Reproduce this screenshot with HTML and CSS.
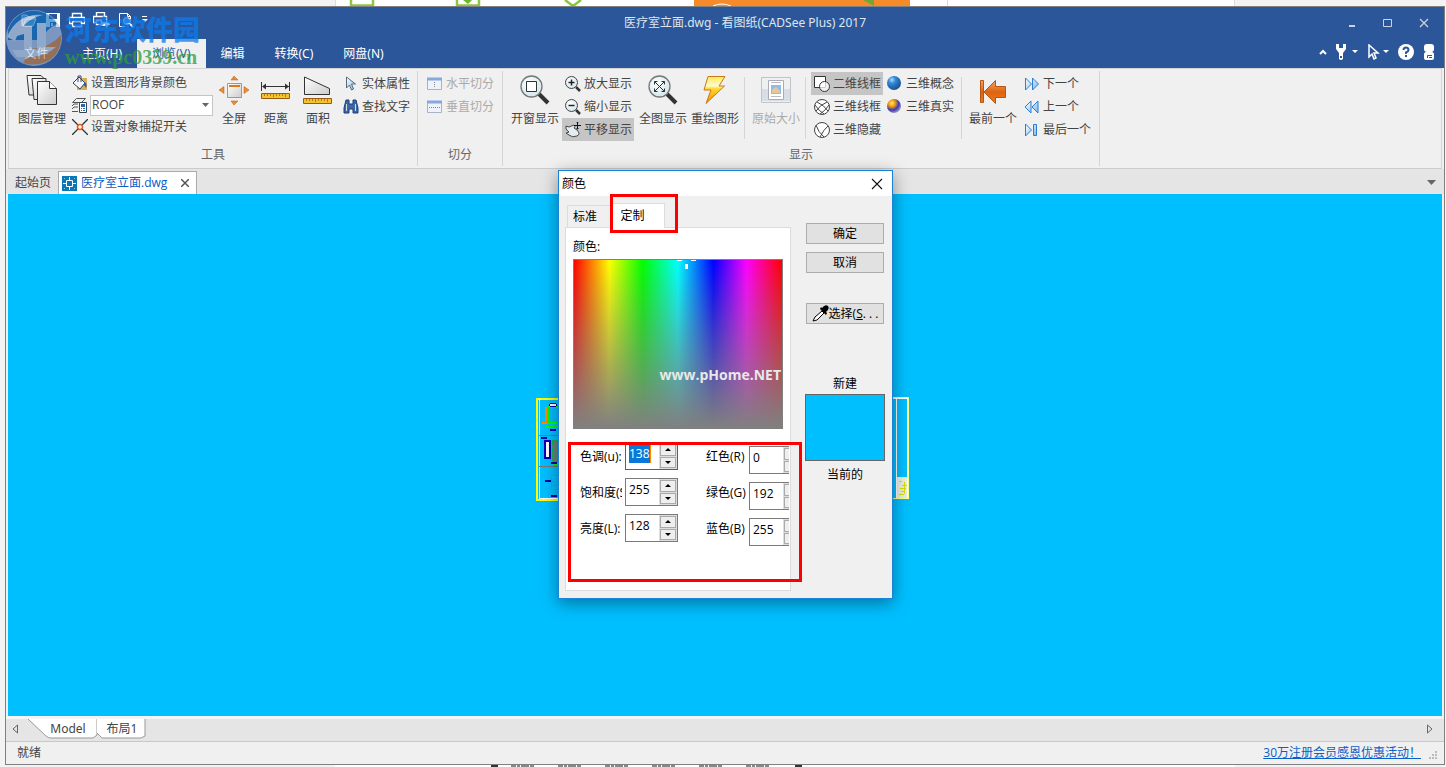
FILE: index.html
```html
<!DOCTYPE html>
<html lang="zh-CN">
<head>
<meta charset="utf-8">
<title>医疗室立面.dwg - 看图纸(CADSee Plus) 2017</title>
<link rel="stylesheet" href="styles.css">
</head>
<body>
<svg width="0" height="0" class="defs" aria-hidden="true">
  <defs>
    <linearGradient id="gPage" x1="0" y1="0" x2="1" y2="1"><stop offset="0" stop-color="#fff"/><stop offset="1" stop-color="#ccc"/></linearGradient>
    <linearGradient id="gBlue" x1="0" y1="0" x2="1" y2="1"><stop offset="0" stop-color="#fff"/><stop offset="1" stop-color="#7ab8f0"/></linearGradient>
    <linearGradient id="gBolt" x1="0" y1="0" x2="0" y2="1"><stop offset="0" stop-color="#ffe95a"/><stop offset=".35" stop-color="#fffbd0"/><stop offset=".45" stop-color="#ffd930"/><stop offset="1" stop-color="#ff8a00"/></linearGradient>
    <linearGradient id="gArrow" x1="0" y1="0" x2="0" y2="1"><stop offset="0" stop-color="#f4a56a"/><stop offset=".5" stop-color="#dd6410"/><stop offset="1" stop-color="#f07a18"/></linearGradient>
    <radialGradient id="gLens" cx=".4" cy=".35" r=".7"><stop offset="0" stop-color="#fff"/><stop offset="1" stop-color="#cfe6e8"/></radialGradient>
    <radialGradient id="gBall" cx=".35" cy=".28" r=".75"><stop offset="0" stop-color="#a8e0ff"/><stop offset=".35" stop-color="#3486d6"/><stop offset="1" stop-color="#175090"/></radialGradient>
    <radialGradient id="gGold" cx=".35" cy=".3" r=".75"><stop offset="0" stop-color="#fff050"/><stop offset=".35" stop-color="#e8901c"/><stop offset=".65" stop-color="#3b39b8"/><stop offset="1" stop-color="#a8a4b8"/></radialGradient>
  </defs>
</svg>

<div class="strip strip-top" aria-hidden="true">
  <svg width="1446" height="6" viewBox="0 0 1446 6"><path fill="#fff" d="M335 0h900v6H335z"/><path stroke="#ddd" d="M335.500 0v6M947.500 0v6M1234.500 0v6"/><path fill="none" stroke="#8cc63f" stroke-width="2.500" d="M351 0v5.500h22V0M457 0v5.500h22V0M565 0l8 6 8-6"/><path fill="#6fb52d" d="M463 0h9l-4 4z"/><path fill="#f58b2b" d="M694 0h216v6H694z"/><path d="M713 6q9-4 18 0" fill="none" stroke="#fff"/><path fill="#6fa53a" d="M863 0h11v6z"/></svg>
</div>

<main class="window">
  <header class="head">
    <div class="titlebar">
      <div class="quick">
        <button aria-label="打开"><svg width="16" height="16"><path d="M1 14V3h5l1 2h7v3M2 14l3-7h10l-3 7z" fill="#6fa0cc" stroke="#fff"/></svg></button>
        <button aria-label="保存"><svg width="16" height="16"><path fill="#fff" d="M1 1h14v14H1z"/><path fill="#2b579a" d="M4 2h8v5H4zM5 10h6v5H5z"/><path fill="#fff" d="M6 11h2v3H6z"/></svg></button>
        <button aria-label="打印"><svg width="16" height="16"><path d="M3.500 5.500v-4h9v4M3.500 11.500h-3v-6h15v6h-3M3.500 9.500h9v5h-9z" fill="none" stroke="#fff" stroke-width="1.400"/></svg></button>
        <button aria-label="批量打印"><svg width="17" height="16"><path d="M3.500 4.500v-4h8v4M3.500 10.500h-3v-6h13v4M3.500 8.500h5v4h-5z" fill="none" stroke="#fff" stroke-width="1.400"/><path fill="#fff" d="M8 10h5v-2l4 4-4 4v-2H8z"/></svg></button>
        <button aria-label="打印预览"><svg width="16" height="16"><path d="M7 14.500H1.500v-13h8l3 3v4M9.500 1.500v3h3" fill="none" stroke="#fff"/><circle cx="9" cy="9" r="3.500" fill="#6fa0cc" stroke="#fff"/><path d="M12 12l3 3" stroke="#fff" stroke-width="2"/></svg></button>
        <button class="narrow" aria-label="自定义快速访问工具栏"><svg width="6" height="8"><path fill="#fff" d="M0 0h5v1H0zM0 3h6L3 6z"/></svg></button>
      </div>
      <h1>医疗室立面.dwg - 看图纸(CADSee Plus) 2017</h1>
      <div class="winctl">
        <button aria-label="最小化"><svg width="10" height="10"><path stroke="#cbd3df" stroke-width="2" d="M2 8h6"/></svg></button>
        <button aria-label="最大化"><svg width="10" height="10"><path fill="none" stroke="#cbd3df" d="M.5 1.500h8v7h-8z"/></svg></button>
        <button aria-label="关闭"><svg width="10" height="10"><path stroke="#cbd3df" stroke-width="1.300" d="M1 1l8 8M9 1L1 9"/></svg></button>
      </div>
    </div>
    <nav class="menubar">
      <button class="file">文件</button><button>主页(H)</button><button class="on">浏览(V)</button><button>编辑</button><button>转换(C)</button><button>网盘(N)</button>
      <div class="tools">
        <button aria-label="折叠功能区"><svg width="8" height="6"><path d="M1 5l3-3 3 3" fill="none" stroke="#fff" stroke-width="2"/></svg></button>
        <button aria-label="设置"><svg width="22" height="16"><path fill="#fff" d="M0 0h3v4h4V0h3v5L7 9v6q-2 2-4 0V9L0 5zM16 6h6l-3 3z"/><path fill="#2b579a" d="M4 12h2v2H4z"/></svg></button>
        <button aria-label="选择工具"><svg width="22" height="16"><path d="M2 1v12l3-3 2 5 2-1-2-5h4z" fill="#2b579a" stroke="#fff" stroke-width="1.500"/><path fill="#fff" d="M16 6h6l-3 3z"/></svg></button>
        <button aria-label="帮助"><svg width="16" height="16"><circle cx="8" cy="8" r="8" fill="#fff"/><path d="M5.500 6q0-2.500 2.500-2.500T10.500 6Q10.500 7.500 8 8.500V10" fill="none" stroke="#2b579a" stroke-width="2"/><path fill="#2b579a" d="M7 11h2v2H7z"/></svg></button>
        <button aria-label="账户"><svg width="12" height="18"><rect x="1" y="1" width="10" height="8" rx="3" fill="#fff"/><rect x="1" y="9" width="10" height="8" rx="2" fill="#fff"/><path d="M1 9h1M10 9h1M4.500 15v-2.500H9M6 14.500h3" stroke="#2b579a" fill="none"/></svg></button>
      </div>
    </nav>
  </header>

  <section class="ribbon" aria-label="浏览">
    <div class="group">
      <div class="items">
        <button class="big"><svg width="32" height="32"><g fill="url(#gPage)" stroke="#333"><path d="M1 1.500h14l3 3V21H3z"/><path d="M6 4.500h14v21H8z"/><path d="M11.500 7.500h12l7 7v16h-19z"/><path d="M23.500 7.500v7h7" fill="#fff"/></g></svg>图层管理</button>
        <div class="col tight">
          <button><svg width="16" height="16"><path d="M5 3h10v12H5z" fill="#d8ad55"/><path d="M1 8l6-6 6 6-5 6z" fill="#f2f6fa" stroke="#345"/><path d="M6 7V1h3v6" fill="none" stroke="#446"/><path d="M12 7q4 1 2 6l-2-3z" fill="#2462ac"/></svg>设置图形背景颜色</button>
          <div class="combo"><svg width="16" height="16"><path d="M5.500 1.500h9l-4 4h-9zM1 9l2-2h4M1 12l2-2h4M1 14.500h6" fill="none" stroke="#555"/><path fill="#fff" stroke="#345" d="M8.500 5.500h7v10h-7z"/><path fill="#2668b0" d="M10 7h4v3h-4zM10 11h1v1h-1zM12 11h2v1h-2zM10 13h1v1h-1zM12 13h2v1h-2z"/></svg><span class="selbox"><select aria-label="图层"><option>ROOF</option></select><svg width="7" height="4"><path fill="#666" d="M0 0h7L3.500 4z"/></svg></span></div>
          <button><svg width="16" height="16"><path d="M0 0l16 16M16 0L0 16" stroke="#333" stroke-width="1.300"/><circle cx="8" cy="8" r="2.500" fill="#fff" stroke="#e25a1c" stroke-width="1.500"/></svg>设置对象捕捉开关</button>
        </div>
        <button class="big mid"><svg width="32" height="32"><path d="M9.500 9.500h14v14h-14z" fill="url(#gPage)" stroke="#999"/><path stroke="#e07818" stroke-width="2" d="M11 12h11"/><path fill="#ee8a30" stroke="#b85c10" stroke-width=".5" d="M16 2l4 4h-7zM16 31l4-4h-7zM1 16l5-3.500v7zM31 16l-5-3.500v7z"/></svg>全屏</button>
        <button class="big mid"><svg width="32" height="32"><path d="M1.500 8v9M29.500 8v9M3 12.500h26" stroke="#333"/><path fill="#333" d="M2 12.500l4-3v6zM29 12.500l-4-3v6z"/><path fill="#f2c32c" stroke="#9a5b14" d="M1.500 19.500h28v5h-28z"/><path stroke="#b07c1c" d="M4.500 20v2M7.500 20v2M10.500 20v2M13.500 20v3M16.500 20v2M19.500 20v2M22.500 20v2M25.500 20v3"/></svg>距离</button>
        <button class="big mid"><svg width="32" height="32"><path fill="url(#gPage)" stroke="#333" d="M2.500 3v17.500h25v-6z"/><path fill="#f2c32c" stroke="#9a5b14" d="M1.500 24.500h28v5h-28z"/><path stroke="#b07c1c" d="M4.500 25v2M7.500 25v2M10.500 25v2M13.500 25v3M16.500 25v2M19.500 25v2M22.500 25v2M25.500 25v3"/></svg>面积</button>
        <div class="col">
          <button><svg width="16" height="16"><path d="M3.500 1v11l3-3 2 5 2-1-2-5h4z" fill="url(#gBlue)" stroke="#5a6a7a"/></svg>实体属性</button>
          <button><svg width="16" height="16"><path d="M3 1h3v4h4V1h3l2 8v5h-5v-4H6v4H1V9z" fill="#3a68a8" stroke="#1f3f78"/><path stroke="#cde" d="M3.500 5v7M12.500 5v7"/></svg>查找文字</button>
        </div>
      </div>
      <h2>工具</h2>
    </div>
    <div class="group split">
      <div class="items">
        <div class="col">
          <button disabled><svg width="16" height="16"><path fill="#eef3fb" stroke="#a8b4c6" d="M.5 2.500h14v11H.5z"/><path stroke="#85a9dc" stroke-width="3" d="M0 3h15"/><path stroke="#888" stroke-dasharray="1 1" d="M7.500 6v6"/></svg>水平切分</button>
          <button disabled><svg width="16" height="16"><path fill="#eef3fb" stroke="#a8b4c6" d="M.5 2.500h14v11H.5z"/><path stroke="#85a9dc" stroke-width="3" d="M0 3h15"/><path stroke="#888" stroke-dasharray="1 1" d="M2 8.500h11"/></svg>垂直切分</button>
        </div>
      </div>
      <h2>切分</h2>
    </div>
    <div class="group display">
      <div class="items">
        <button class="big"><svg width="32" height="32"><path d="M20 20l9 9" stroke="#333" stroke-width="4"/><circle cx="12.500" cy="12.500" r="10.500" fill="url(#gLens)" stroke="#777" stroke-width="1.300"/><path d="M7.500 7.500h10v10h-10z" fill="#fff" stroke="#333"/></svg>开窗显示</button>
        <div class="col fit">
          <button><svg width="16" height="16"><path d="M11 11l4 4" stroke="#333" stroke-width="2.500"/><circle cx="6.500" cy="6.500" r="6" fill="url(#gLens)" stroke="#444"/><path stroke="#222" stroke-width="1.500" d="M3.500 6.500h6M6.500 3.500v6"/></svg>放大显示</button>
          <button><svg width="16" height="16"><path d="M11 11l4 4" stroke="#333" stroke-width="2.500"/><circle cx="6.500" cy="6.500" r="6" fill="url(#gLens)" stroke="#444"/><path stroke="#222" stroke-width="1.500" d="M3.500 6.500h6"/></svg>缩小显示</button>
          <button class="sel"><svg width="16" height="16"><path fill="#e4edf1" stroke="#444" d="M1 4l3 1 5-2q2 1 0 3l3 2q4 4 0 6-5 2-8-1l-3-2 3-1-3-3z"/><path stroke="#111" d="M12.500 0v7M9 3.500h7"/><path fill="#111" d="M11 1l1.500-1L14 1zM11 6h3l-1.500 1.500z"/></svg>平移显示</button>
        </div>
        <button class="big"><svg width="32" height="32"><path d="M20 20l9 9" stroke="#333" stroke-width="4"/><circle cx="12.500" cy="12.500" r="10.500" fill="url(#gLens)" stroke="#777" stroke-width="1.300"/><path d="M7.500 7.500l10 10M17.500 7.500l-10 10M7.500 10.500v-3h3M14.500 7.500h3v3M17.500 14.500v3h-3M10.500 17.500h-3v-3" fill="none" stroke="#333"/></svg>全图显示</button>
        <button class="big"><svg width="32" height="32"><path d="M9 2.500h17L20 12h5.500L7 29.500l5-13.500H5z" fill="url(#gBolt)" stroke="#c97814"/></svg>重绘图形</button>
        <i class="sep"></i>
        <button class="big" disabled><svg width="32" height="32"><path d="M1.500 3.500h29v25h-29z" fill="#eef0f2" stroke="#c0c4c8"/><path fill="#d9dee5" d="M2 15h28v12H2z"/><path d="M8.500 6.500h15v19h-15z" fill="#fff" stroke="#aab"/><path fill="#8fbce8" d="M11 11h10v9H11z"/><path fill="#e6c79c" d="M12 16l4-3 4 4v2h-8z"/><path stroke="#bbb" d="M11 8.500h10M11 22.500h10"/></svg>原始大小</button>
        <i class="sep"></i>
        <div class="col fit">
          <button class="sel"><svg width="16" height="16"><path d="M.5.500h11v11H.5z" fill="#fff" stroke="#333"/><circle cx="10.500" cy="10.500" r="5" fill="#fff" fill-opacity=".75" stroke="#333"/></svg>二维线框</button>
          <button><svg width="16" height="16"><g fill="#fff" stroke="#444"><circle cx="8" cy="8" r="7.500"/><path fill="none" d="M1 6q4 6 9 9M15 6q-4 6-9 9M3 3q7 3 11 9M13 3Q6 6 2 12"/></g></svg>三维线框</button>
          <button><svg width="16" height="16"><g fill="#fff" stroke="#444"><circle cx="8" cy="8" r="7.500"/><path fill="none" d="M2 3q2 7 8 12M14 4Q10 7 6 15"/></g></svg>三维隐藏</button>
        </div>
        <div class="col fit">
          <button><svg width="16" height="16"><circle cx="7" cy="7" r="7" fill="url(#gBall)"/></svg>三维概念</button>
          <button><svg width="16" height="16"><circle cx="7" cy="7" r="7" fill="url(#gGold)"/></svg>三维真实</button>
        </div>
        <i class="sep"></i>
        <button class="big"><svg width="32" height="32"><path fill="url(#gArrow)" stroke="#b85512" d="M3.500 6.500h3v22h-3zM7 18L18.500 6.500v6h10v11h-10v6z"/></svg>最前一个</button>
        <div class="col">
          <button><svg width="16" height="16"><path d="M1.500 2l6 6-6 6zM8.500 2l6 6-6 6z" fill="url(#gBlue)" stroke="#2c7fd0"/></svg>下一个</button>
          <button><svg width="16" height="16"><path d="M7 2L1 8l6 6zM14 2L8 8l6 6z" fill="url(#gBlue)" stroke="#2c7fd0"/></svg>上一个</button>
          <button><svg width="16" height="16"><path d="M1.500 2l6 6-6 6zM9.500 2.500h3v11h-3z" fill="url(#gBlue)" stroke="#2c7fd0"/></svg>最后一个</button>
        </div>
      </div>
      <h2>显示</h2>
    </div>
  </section>

  <div class="doctabs">
    <button>起始页</button>
    <div class="doc"><svg width="15" height="15"><path fill="#0878b8" d="M0 0h15v15H0z"/><path d="M4.500 4.500h6v6h-6zM7.500 1v4M7.500 10v4M1 7.500h4M10 7.500h4" fill="none" stroke="#fff"/><path fill="#8cd" d="M2 2h1v1H2zM12 2h1v1h-1zM2 12h1v1H2zM12 12h1v1h-1z"/></svg><a href="#drawing">医疗室立面.dwg</a><button aria-label="关闭文档"><svg width="8" height="8"><path stroke="#555" stroke-width="1.500" d="M0 0l8 8M8 0L0 8"/></svg></button></div>
    <button class="more" aria-label="文档列表"><svg width="9" height="5"><path fill="#666" d="M0 0h9L4.500 5z"/></svg></button>
  </div>

  <div class="canvas" id="drawing">
    <svg class="cad" width="376" height="104" viewBox="0 0 376 104" shape-rendering="crispEdges">
      <path d="M1.500 1v102M1 1.500h28M1 102.500h30" stroke="#ff0" stroke-width="2" fill="none"/>
      <path d="M4.500 2v100M4 101.500h25" stroke="#fff" fill="none"/>
      <path d="M4 38.500h25M4 69.500h25" stroke="#777"/>
      <path d="M10.500 10v14M7 25.500h5" stroke="#f80" stroke-width="2" fill="none"/>
      <path d="M23 9.500H13V25M11 29.500h14M12 25.500h12M18 66.500h8" stroke="#0f0" stroke-width="2" fill="none"/>
      <path d="M10 43.500h5v17h-5z" fill="#fff" stroke="#0000b8" stroke-width="2"/>
      <path d="M17 43h6v21h-6z" fill="#687" stroke="#0b5" stroke-dasharray="2 1"/>
      <path d="M16 78.500h6M16 78v14h7M17 84h5M18 88h4" stroke="#a76" fill="none"/>
      <g fill="#fff" stroke="#00a"><ellipse cx="18" cy="8" rx="4" ry="1.500"/><ellipse cx="18" cy="33" rx="3" ry="1"/><ellipse cx="9" cy="41" rx="3" ry="1"/><ellipse cx="19" cy="66" rx="3" ry="1"/><ellipse cx="13" cy="84" rx="3" ry="1"/><ellipse cx="19" cy="99" rx="3" ry="1"/></g>
      <path d="M350 .500h23M350 101.500h23M373.500 0v102" stroke="#ff8" fill="none"/>
      <path d="M361.500 1v100M372.500 1v100M350 1.500h23" stroke="#fff" fill="none"/>
      <path fill="#e8f0e0" d="M362 80h10v21h-10z"/><path d="M364 84h3M367 88h5M365 91h6M366 94h4M364 97h5M369 85v12" stroke="#dd0"/>
    </svg>
  </div>

  <div class="sheets">
    <button class="arrow" aria-label="向左滚动"><svg width="6" height="10"><path d="M5.500 1v8L1 5z" fill="none" stroke="#666"/></svg></button>
    <button class="sheet model"><svg width="71" height="20"><path d="M1 0l18 17q2 2 5 2h42l4-3V0z" fill="#fff"/><path d="M1 0l18 17q2 2 5 2h42l4-3V0" fill="none" stroke="#999"/></svg><span>Model</span></button>
    <button class="sheet layout"><svg width="50" height="20"><path d="M0 0v14l5 5h39l4-2V0z" fill="#fff"/><path d="M0 14l5 5h39l4-2V0" fill="none" stroke="#999"/></svg><span>布局1</span></button>
    <button class="arrow end" aria-label="向右滚动"><svg width="6" height="10"><path d="M.5 1v8L5 5z" fill="none" stroke="#666"/></svg></button>
  </div>
  <footer class="status"><span>就绪</span><a href="#promo">30万注册会员感恩优惠活动！</a><svg width="9" height="9"><path fill="#bbb" d="M6 0h2v2H6zM3 3h2v2H3zM6 3h2v2H6zM0 6h2v2H0zM3 6h2v2H3zM6 6h2v2H6z"/></svg></footer>
</main>

<div class="strip strip-bottom" aria-hidden="true"><svg width="1446" height="2"><path fill="#fff" d="M335 0h900v2H335z"/><path stroke="#888" stroke-width="2" stroke-dasharray="5 1 3 1 8 1 4 24" d="M511 1h260"/><path fill="#333" d="M491 0h7v2h-7zM795 0h7v2h-7z"/></svg></div>

<div class="sitemark" aria-hidden="true">
  <svg width="58" height="58" viewBox="0 0 58 58"><circle cx="29" cy="29" r="28" fill="#a9bdd8"/><path d="M3 21A27 27 0 0 1 52 15Q40 20 38 31H3z" fill="#0d6fbd"/><path d="M56 26Q57 44 43 52 31 58 18 54l8-14q20-2 30-14z" fill="#d08038"/><path d="M2 28Q12 4 38 6 18 10 10 32zM18 17h9v27h-8V25l-7 2 1-6zM32 14h9v24h10Q42 46 28 48H12l-5-7h25z" fill="#cad6e6"/></svg>
  <div><p class="cn">河东软件园</p><p class="url">www.pc0359.cn</p></div>
</div>

<section class="dialog" role="dialog" aria-labelledby="dlg-title">
  <div class="dlg-head"><h2 id="dlg-title">颜色</h2><button aria-label="关闭"><svg width="12" height="12"><path stroke="#111" stroke-width="1.100" d="M1 1l10 10M11 1L1 11"/></svg></button></div>
  <div class="dlg-body">
    <div class="left">
      <div class="tabs" role="tablist"><button role="tab">标准</button><button role="tab" aria-selected="true">定制</button></div>
      <div class="panel">
        <p>颜色:</p>
        <div class="spectrum"><svg width="20" height="10"><path fill="#fff" d="M1 0h5v1H1zM15 0h5v1h-5zM9 4h3v5H9z"/></svg><span>www.pHome.NET</span></div>
        <div class="fields">
          <div class="fcol">
            <div class="field"><label for="hue">色调(u):</label><span class="spin focus"><input id="hue" value="138"><b>138</b><span class="ud"><button aria-label="增加色调"></button><button aria-label="减少色调"></button></span></span></div>
            <div class="field"><label for="sat">饱和度(S):</label><span class="spin"><input id="sat" value="255"><span class="ud"><button aria-label="增加饱和度"></button><button aria-label="减少饱和度"></button></span></span></div>
            <div class="field"><label for="lum">亮度(L):</label><span class="spin"><input id="lum" value="128"><span class="ud"><button aria-label="增加亮度"></button><button aria-label="减少亮度"></button></span></span></div>
          </div>
          <div class="fcol rgb">
            <div class="field"><label for="red">红色(R)</label><span class="spin"><input id="red" value="0"><span class="ud"><button aria-label="增加红色"></button><button aria-label="减少红色"></button></span></span></div>
            <div class="field"><label for="green">绿色(G)</label><span class="spin"><input id="green" value="192"><span class="ud"><button aria-label="增加绿色"></button><button aria-label="减少绿色"></button></span></span></div>
            <div class="field"><label for="blue">蓝色(B)</label><span class="spin"><input id="blue" value="255"><span class="ud"><button aria-label="增加蓝色"></button><button aria-label="减少蓝色"></button></span></span></div>
          </div>
        </div>
      </div>
    </div>
    <div class="right">
      <button>确定</button>
      <button>取消</button>
      <button class="pick"><svg width="17" height="17"><path d="M1 16l2-4 7-6 2 2-7 7z" fill="#fff" stroke="#000"/><path d="M8 4l6 6 1-2-1-1q4-3 2-6-3-2-6 2L9 2z" fill="#000"/></svg>选择(<u>S</u>. . .</button>
      <p>新建</p>
      <div class="swatch"></div>
      <p>当前的</p>
    </div>
  </div>
  <i class="mark mark-tab"></i>
  <i class="mark mark-fields"></i>
</section>
</body>
</html>
```

FILE: styles.css
```css
* { box-sizing: border-box; }
body {
  margin: 0; min-height: 100vh; display: flex; flex-direction: column; position: relative;
  overflow: hidden; background: #f3f3f3; color: #444;
  font: 12px/18px "Open Sans", "Noto Sans CJK SC", sans-serif;
}
h1, h2, p { margin: 0; font-size: 12px; font-weight: 400; }
button { font: inherit; color: inherit; background: none; border: 0; padding: 0; margin: 0; white-space: nowrap; }
svg { display: block; flex: none; }
.defs { position: absolute; }
.strip { overflow: hidden; }
.strip-top { height: 6px; }
.strip-bottom { height: 2px; }

.window { flex: 1; display: flex; flex-direction: column; margin: 0 1px 0 5px; border: 1px solid #808080; background: #f0f0f0; }
.head { background: #2b579a; color: #fff; height: 61px; display: flex; flex-direction: column; font-family: "Noto Sans", "Noto Sans CJK SC", sans-serif; }
.titlebar { height: 32px; display: grid; grid-template-columns: 1fr auto 1fr; align-items: center; color: #dfe6f0; padding-left: 40px; }
.quick { display: flex; gap: 8px; margin-left: -40px; padding: 0 0 6px 15px; align-items: center; }
.winctl { display: flex; gap: 26px; justify-content: flex-end; padding-right: 15px; }
.menubar { flex: 1; display: flex; align-items: stretch; }
.menubar > button { padding: 0 15px; }
.menubar > .file { width: 61px; }
.menubar > .on { background: #f0f0f0; color: #1a5fb4; }
.tools { margin-left: auto; display: flex; align-items: center; gap: 9px; padding: 0 9px 4px 0; }

.ribbon { display: flex; height: 101px; border: 1px solid #d4d4d4; border-bottom-color: #ccc; padding: 2px 0; margin: 0 2px; }
.group { border-right: 1px solid #d4d4d4; display: flex; flex-direction: column; justify-content: space-between; }
.group h2 { text-align: center; color: #666; line-height: 22px; }
.items { display: flex; height: 71px; padding: 1px 5px 0 7px; }
.split .items { padding: 1px 6px 0 5px; }
.display .items { padding: 1px 3px 0 6px; }
.display .col:last-child { padding: 0 3px 0 2px; }
.big { width: 52px; display: flex; flex-direction: column; align-items: center; gap: 4px; padding-top: 2px; height: 60px; }
.mid { width: 42px; }
.col { display: flex; flex-direction: column; padding-left: 1px; }
.col > button { height: 23px; display: flex; align-items: center; gap: 3px; padding: 0 2px 0 3px; }
.tight { padding-left: 2px; }
.tight > button { height: 22px; padding-left: 2px; }
.combo { display: flex; align-items: center; gap: 3px; padding-left: 1px; height: 22px; }
.selbox { display: flex; align-items: center; width: 123px; height: 21px; border: 1px solid #c4c4c4; background: #fff; padding-right: 3px; }
.selbox select { flex: 1; appearance: none; border: 0; background: none; font: inherit; line-height: 18px; color: #444; padding: 0 1px; }
.sel { background: #c5c5c5; }
.fit { padding: 0; }
.big + .fit { margin: 0 3px 0 1px; }
.fit + .fit { padding: 0 2px 0 1px; }
.sep { width: 1px; height: 62px; margin: 5px 5px 0 3px; background: #d4d4d4; }
button:disabled { color: #aaa; }

.doctabs { display: flex; height: 25px; background: #e5e5e5; padding: 2px 8px 0 9px; }
.doc { display: flex; align-items: center; gap: 4px; margin-left: 7px; padding: 0 7px 0 3px; background: #fff; border: 1px solid #aaa; border-bottom: 0; }
.doc a { color: #0a5bc4; text-decoration: none; }
.doc button { margin-left: 10px; }
.more { margin-left: auto; }

.canvas { flex: 1; margin: 0 2px; background: #00bfff; display: grid; place-items: center; padding: 0 4px 12px 0; }
.sheets { display: flex; height: 26px; padding: 0 11px 3px 6px; background: #e5e5e5; border-top: 3px solid #f4f4f4; border-bottom: 1px solid #c8c8c8; font-family: "Noto Sans", "Noto Sans CJK SC", sans-serif; }
.sheet { position: relative; height: 19px; display: flex; align-items: center; justify-content: center; }
.sheet svg { position: absolute; left: 0; top: 0; }
.sheet span { position: relative; }
.model { width: 70px; margin-left: 9px; padding-left: 12px; }
.layout { width: 50px; }
.end { margin-left: auto; }
.status { display: flex; align-items: center; height: 22px; padding: 0 6px 0 11px; }
.status a { margin-left: auto; color: #0a5fc8; }
.status svg { align-self: flex-end; margin: 0 0 4px 8px; }

.sitemark { position: absolute; left: 5px; top: 9px; display: flex; gap: 2px; opacity: .75; pointer-events: none; }
.sitemark svg { opacity: .85; }
.cn { color: #0c7aec; font: 900 27px/32px "Noto Sans CJK SC", sans-serif; padding-top: 4px; }
.url { color: #2f9c3c; font: 700 20px/24px "Liberation Serif", serif; }

.dialog { position: absolute; left: calc(50% - 165px); top: 170px; width: 335px; border: 1px solid #1883d7; background: #f0f0f0; color: #000; box-shadow: 0 4px 16px rgba(0, 0, 0, .4); }
.dlg-head { display: flex; justify-content: space-between; align-items: center; height: 25px; padding: 0 9px 0 3px; background: #fff; }
.dlg-body { display: flex; gap: 14px; padding: 7px 7px 7px 6px; }
.left { width: 226px; }
.tabs { display: flex; align-items: flex-end; padding-left: 2px; height: 24px; }
.tabs button { width: 46px; height: 22px; border: 1px solid #dcdcdc; border-bottom: 0; padding-right: 10px; }
.tabs [aria-selected] { width: 52px; height: 25px; background: #fff; position: relative; margin-bottom: -1px; padding-right: 12px; border-left: 0; }
.panel { border: 1px solid #dcdcdc; background: #fff; height: 364px; padding: 10px 1px 0 7px; }
.spectrum { position: relative; width: 210px; height: 170px; margin-top: 3px; border: 1px solid #808080; background: linear-gradient(transparent, #808080), linear-gradient(90deg, red, #ff0 17%, #0f0 33%, #0ff 50%, #00f 67%, #f0f 83%, red); }
.spectrum svg { position: absolute; left: 102px; top: 0; }
.spectrum span { position: absolute; right: 1px; bottom: 43px; color: #e8e8e8; font: 700 14px/20px "Open Sans", sans-serif; }
.fields { display: flex; gap: 28px; padding: 13px 0 0 7px; }
.fcol { display: flex; flex-direction: column; gap: 8px; }
.field { display: flex; height: 28px; }
.field label { width: 42px; margin-right: 3px; line-height: 30px; overflow: hidden; white-space: nowrap; }
.rgb { padding-top: 4px; }
.rgb .field { width: 83px; overflow: hidden; }
.rgb label { width: 40px; line-height: 22px; flex: none; }
.rgb .spin { flex: none; }
.spin { position: relative; width: 53px; display: flex; border: 1px solid #7a7a7a; background: #fff; }
.spin input { min-width: 0; flex: 1; border: 0; padding: 0 0 4px 3px; background: none; font: inherit; color: #000; outline: 0; }
.spin b { position: absolute; left: 3px; top: 2px; height: 18px; background: #0a78d8; color: #fff; font-weight: 400; border-right: 1px solid #f80; }
.focus { border-color: #0078d7; }
.ud { width: 18px; display: flex; flex-direction: column; background: #ddd; gap: 1px; padding: 1px; }
.ud button { flex: 1; border: 1px solid #aaa; background: #eee; display: grid; place-items: center; }
.ud button::before { content: ""; border: 3px solid transparent; border-top: 0; border-bottom-color: #000; }
.ud button + button::before { border-bottom: 0; border-top: 3px solid #000; }
.right { flex: 1; display: flex; flex-direction: column; padding-top: 20px; }
.right button { height: 21px; margin: 0 1px 8px; border: 1px solid #adadad; background: #e1e1e1; line-height: 20px; }
.right .pick { display: flex; align-items: center; justify-content: center; margin: 22px 1px 50px; white-space: pre; }
.right p { text-align: center; line-height: 20px; }
.swatch { height: 67px; margin-bottom: 4px; border: 1px solid #666; background: #00bfff; }
.mark { position: absolute; border: 3px solid #f00; pointer-events: none; }
.mark-tab { left: 51px; top: 23px; width: 68px; height: 39px; }
.mark-fields { left: 9px; top: 271px; width: 234px; height: 140px; }
```
